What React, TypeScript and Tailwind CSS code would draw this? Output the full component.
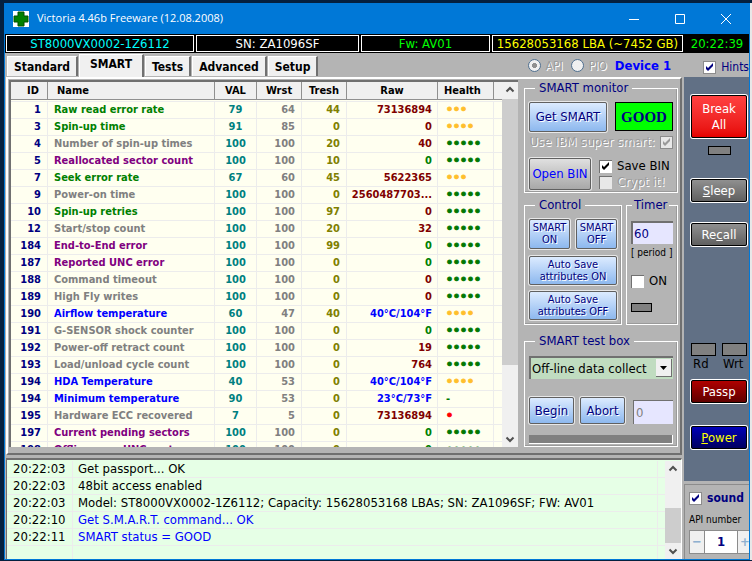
import React, { useState } from 'react';
import clsx from 'clsx';

type Attr = { id: number; name: string; val: number; wrst: number; tresh: number; raw: string; health: string };

const ATTRS: Attr[] = [
  { id: 1, name: 'Raw read error rate', val: 79, wrst: 64, tresh: 44, raw: '73136894', health: '•••' },
  { id: 3, name: 'Spin-up time', val: 91, wrst: 85, tresh: 0, raw: '0', health: '••••' },
  { id: 4, name: 'Number of spin-up times', val: 100, wrst: 100, tresh: 20, raw: '40', health: '•••••' },
  { id: 5, name: 'Reallocated sector count', val: 100, wrst: 100, tresh: 10, raw: '0', health: '•••••' },
  { id: 7, name: 'Seek error rate', val: 67, wrst: 60, tresh: 45, raw: '5622365', health: '•••' },
  { id: 9, name: 'Power-on time', val: 100, wrst: 100, tresh: 0, raw: '2560487703...', health: '•••••' },
  { id: 10, name: 'Spin-up retries', val: 100, wrst: 100, tresh: 97, raw: '0', health: '•••••' },
  { id: 12, name: 'Start/stop count', val: 100, wrst: 100, tresh: 20, raw: '32', health: '•••••' },
  { id: 184, name: 'End-to-End error', val: 100, wrst: 100, tresh: 99, raw: '0', health: '•••••' },
  { id: 187, name: 'Reported UNC error', val: 100, wrst: 100, tresh: 0, raw: '0', health: '•••••' },
  { id: 188, name: 'Command timeout', val: 100, wrst: 100, tresh: 0, raw: '0', health: '•••••' },
  { id: 189, name: 'High Fly writes', val: 100, wrst: 100, tresh: 0, raw: '0', health: '•••••' },
  { id: 190, name: 'Airflow temperature', val: 60, wrst: 47, tresh: 40, raw: '40°C/104°F', health: '••••' },
  { id: 191, name: 'G-SENSOR shock counter', val: 100, wrst: 100, tresh: 0, raw: '0', health: '•••••' },
  { id: 192, name: 'Power-off retract count', val: 100, wrst: 100, tresh: 0, raw: '19', health: '•••••' },
  { id: 193, name: 'Load/unload cycle count', val: 100, wrst: 100, tresh: 0, raw: '764', health: '•••••' },
  { id: 194, name: 'HDA Temperature', val: 40, wrst: 53, tresh: 0, raw: '40°C/104°F', health: '••••' },
  { id: 194, name: 'Minimum temperature', val: 90, wrst: 53, tresh: 0, raw: '23°C/73°F', health: '-' },
  { id: 195, name: 'Hardware ECC recovered', val: 7, wrst: 5, tresh: 0, raw: '73136894', health: '•' },
  { id: 197, name: 'Current pending sectors', val: 100, wrst: 100, tresh: 0, raw: '0', health: '•••••' },
  { id: 198, name: 'Offline scan UNC sectors', val: 100, wrst: 100, tresh: 0, raw: '0', health: '•••••' },
];

const LOG = [
  { time: '20:22:03', text: 'Get passport... OK' },
  { time: '20:22:03', text: '48bit access enabled' },
  { time: '20:22:03', text: 'Model: ST8000VX0002-1Z6112; Capacity: 15628053168 LBAs; SN: ZA1096SF; FW: AV01' },
  { time: '20:22:10', text: 'Get S.M.A.R.T. command... OK', blue: true },
  { time: '20:22:11', text: 'SMART status = GOOD', blue: true },
  { time: '', text: '' },
];

const nameColor = (id: number) => {
  if ([1, 3, 7, 10].includes(id)) return 'text-[#008000]';
  if ([5, 184, 187, 197, 198].includes(id)) return 'text-[#800080]';
  if ([190, 194].includes(id)) return 'text-[#0000ff]';
  return 'text-[#808080]';
};

const rawColor = (a: Attr) => {
  if (a.raw.includes('°')) return 'text-[#0000ff]';
  if (a.raw === '0' && ![3, 10, 188, 189].includes(a.id)) return 'text-[#008000]';
  return 'text-[#800000]';
};

const healthColor = (h: string) => {
  if (h === '•') return 'text-[#ff0000]';
  if (h.length === 3 || h.length === 4) return 'text-[#ffbf2b]';
  return 'text-[#007800]';
};

const Tick = ({ className }: { className?: string }) => (
  <svg viewBox="0 0 13 13" className={clsx('pointer-events-none size-[13px] [grid-area:1/1]', className)}>
    <path d="M3 5v3l2 2 5-5V2L5 7z" fill="currentColor" />
  </svg>
);

type CheckProps = { label: string; defaultChecked?: boolean; disabled?: boolean; sunken?: boolean; reverse?: boolean; className?: string };

const Check: React.FC<CheckProps> = ({ label, defaultChecked = false, disabled, sunken, reverse, className }) => {
  const [on, setOn] = useState(defaultChecked);
  return (
    <label className={clsx('flex items-center gap-[5px] whitespace-nowrap', reverse && 'flex-row-reverse', className)}>
      <span className="grid shrink-0 place-items-center">
        <input
          type="checkbox"
          checked={on}
          disabled={disabled}
          onChange={(e) => setOn(e.target.checked)}
          className={clsx(
            'size-[13px] appearance-none [grid-area:1/1]',
            sunken ? 'border-t border-l border-[#707070]' : 'border border-[#8c8c8c]',
            disabled ? 'bg-[#e8e8e8]' : 'bg-white'
          )}
        />
        {on && <Tick className={disabled ? 'text-[#9a9a9a]' : sunken ? 'text-black' : 'text-[#000080]'} />}
      </span>
      <span className={disabled ? 'text-[#9c9c9c] [text-shadow:1px_1px_0_#fff]' : ''}>{label}</span>
    </label>
  );
};

const BlueButton = ({ className, children }: { className?: string; children: React.ReactNode }) => (
  <button
    className={clsx(
      'rounded-[2px] border border-[#606060] text-[#000080] [text-shadow:1px_1px_0_#fff] shadow-[0_0_0_1px_#e8e8e8]',
      'bg-linear-to-b from-[#dcebff] to-[#8db8ee] flex shrink-0 items-center justify-center text-center',
      className
    )}
  >
    {children}
  </button>
);

const SideButton = ({ className, children }: { className?: string; children: React.ReactNode }) => (
  <button className={clsx('w-full rounded-[2px] border border-black ring-1 ring-white bg-linear-to-b', className)}>
    {children}
  </button>
);

const Group = ({ title, className, children }: { title: string; className?: string; children: React.ReactNode }) => (
  <fieldset className={clsx('min-w-0 border border-white shadow-[inset_-1px_-1px_0_#9a9a9a] px-1', className)}>
    <legend className="ml-[6px] px-1 text-[13px] leading-4 text-[#000080]">{title}</legend>
    {children}
  </fieldset>
);

const Led = ({ className }: { className?: string }) => (
  <div className={clsx('border border-black bg-[#808080]', className)} />
);

const Arrow = ({ down }: { down?: boolean }) => (
  <svg viewBox="0 0 16 16" className={clsx('size-4 shrink-0', down && 'rotate-180')}>
    <path d="M4.5 9.5L8 6l3.5 3.5" fill="none" stroke="#505050" strokeWidth="2" />
  </svg>
);

const TitleBar = () => (
  <header className="flex h-[31px] shrink-0 items-center bg-[#0078d7] pl-2 text-white">
    <svg viewBox="0 0 16 16" className="size-4">
      <rect width="16" height="16" fill="#fff" />
      <path d="M5 1h6v4h4v6h-4v4H5v-4H1V5h4z" fill="#008000" stroke="#005000" />
    </svg>
    <h1 className="ml-2 flex-1 font-['Open_Sans','Noto_Sans',sans-serif] text-[11px] [font-stretch:normal]">Victoria 4.46b Freeware (12.08.2008)</h1>
    <button aria-label="Minimize" className="flex w-[46px] justify-center">
      <svg viewBox="0 0 10 10" className="size-[10px]"><path d="M0 5.5h10" stroke="#fff" /></svg>
    </button>
    <button aria-label="Maximize" className="flex w-[46px] justify-center">
      <svg viewBox="0 0 10 10" className="size-[10px]"><path d="M.5.5h9v9h-9z" fill="none" stroke="#fff" /></svg>
    </button>
    <button aria-label="Close" className="flex w-[46px] justify-center">
      <svg viewBox="0 0 10 10" className="size-[10px]"><path d="M0 0l10 10M10 0L0 10" stroke="#fff" /></svg>
    </button>
  </header>
);

const InfoBar = () => (
  <div className="flex h-[19px] shrink-0 items-center gap-[2px] bg-black pl-px text-center text-[13px] leading-[15px] whitespace-nowrap">
    <div className="w-[188px] border border-white text-[#00ffff]">ST8000VX0002-1Z6112</div>
    <div className="w-[163px] border border-white text-white">SN: ZA1096SF</div>
    <div className="min-w-0 flex-1 border border-white text-[#00ff00]">Fw: AV01</div>
    <div className="w-[191px] border border-white text-[#ffff00]">15628053168 LBA (~7452 GB)</div>
    <div className="w-[64px] text-[#00ff00]">20:22:39</div>
  </div>
);

const TABS = ['Standard', 'SMART', 'Tests', 'Advanced', 'Setup'];

const TabBar = () => {
  const [active, setActive] = useState('SMART');
  return (
    <div className="flex h-6 shrink-0 items-end pl-[2px]">
      {TABS.map((t) => (
        <button
          key={t}
          onClick={() => setActive(t)}
          className={clsx(
            'mr-px border-t border-l border-white border-r-2 border-r-[#707070] bg-[#f0f0f0] text-[12px] leading-4 font-bold',
            t === active ? 'h-[23px] px-[10px] pb-1' : 'mb-px h-5 px-[6px]'
          )}
        >
          {t}
        </button>
      ))}
      <div className="flex-1" />
      <div className="flex items-center self-start pt-[3px] text-[12px] leading-4">
        {['API', 'PIO'].map((m) => (
          <label key={m} className="mr-2 flex items-center gap-[5px] text-[#9c9c9c] [text-shadow:1px_1px_0_#fff]">
            <input
              type="radio"
              name="mode"
              disabled
              defaultChecked={m === 'API'}
              className="size-[13px] appearance-none rounded-full border border-[#4f6f8f] bg-[#f0f0f0] checked:bg-[radial-gradient(#909090_30%,#f0f0f0_35%)]"
            />
            {m}
          </label>
        ))}
        <span className="text-[13px] font-bold text-[#0000ff]">Device 1</span>
        <Check label="Hints" defaultChecked className="ml-8 pt-[3px] text-[#000080]" />
      </div>
    </div>
  );
};

const HEAD = 'border-r border-b border-[#909090] bg-[#f0f0f0] pt-px font-bold text-black';
const CELL = 'border-r border-b border-[#ececec]';
const DOTS = "text-[11px] font-['DejaVu_Sans',sans-serif] [font-stretch:normal] [-webkit-text-stroke:1px_currentColor]";

const AttrTable = () => (
  <div className="flex min-w-0 flex-1 border-t-2 border-l-2 border-[#707070] bg-[#fffff0]">
    <div className="min-w-0 flex-1 overflow-hidden">
      <table className="w-full table-fixed border-separate border-spacing-0 text-[11px] leading-4 font-bold whitespace-nowrap">
        <colgroup>
          <col className="w-[37px]" />
          <col />
          <col className="w-[42px]" />
          <col className="w-[45px]" />
          <col className="w-[45px]" />
          <col className="w-[91px]" />
          <col className="w-[56px]" />
          <col className="w-2" />
        </colgroup>
        <thead>
          <tr>
            <th className={clsx(HEAD, 'pr-2 text-right')}>ID</th>
            <th className={clsx(HEAD, 'pl-[9px] text-left')}>Name</th>
            <th className={HEAD}>VAL</th>
            <th className={HEAD}>Wrst</th>
            <th className={HEAD}>Tresh</th>
            <th className={HEAD}>Raw</th>
            <th className={clsx(HEAD, 'pl-[6px] text-left')}>Health</th>
            <th className="border-b border-[#909090] bg-[#f0f0f0]" />
          </tr>
          <tr aria-hidden="true">
            <td colSpan={8} className="h-[2px] border-b border-[#ececec]" />
          </tr>
        </thead>
        <tbody>
          {ATTRS.map((a, i) => (
            <tr key={i}>
              <td className={clsx(CELL, 'pr-[6px] text-right text-[#000080]')}>{a.id}</td>
              <td className={clsx(CELL, 'pl-[6px]', nameColor(a.id))}>{a.name}</td>
              <td className={clsx(CELL, 'text-center text-[#008080]')}>{a.val}</td>
              <td className={clsx(CELL, 'pr-[6px] text-right text-[#808080]')}>{a.wrst}</td>
              <td className={clsx(CELL, 'pr-[6px] text-right text-[#808000]')}>{a.tresh}</td>
              <td className={clsx(CELL, 'pr-[5px] text-right', rawColor(a))}>{a.raw}</td>
              <td className={clsx(CELL, 'pl-2', a.health !== '-' && DOTS, healthColor(a.health))}>{a.health}</td>
              <td className="border-b border-[#ececec]" />
            </tr>
          ))}
        </tbody>
      </table>
    </div>
    <div className="flex w-4 flex-col bg-[#f0f0f0]">
      <Arrow />
      <div className="mt-px h-[266px] bg-[#cdcdcd]" />
      <div className="flex-1" />
      <Arrow down />
    </div>
  </div>
);

const SmartPanel = () => (
  <div className="flex w-[154px] shrink-0 flex-col text-[13px] leading-4">
    <Group title="SMART monitor" className="h-[116px]">
      <div className="mt-[6px] flex gap-2">
        <BlueButton className="h-[30px] w-[78px]">Get SMART</BlueButton>
        <output className="flex h-[29px] flex-1 items-center justify-center border border-black bg-[#00ff00] font-['Liberation_Serif',serif] text-[15px] font-bold text-[#000080]">
          GOOD
        </output>
      </div>
      <Check label="Use IBM super smart:" defaultChecked disabled reverse className="mt-[2px] justify-start" />
      <div className="mt-2 flex gap-2">
        <button className="h-8 w-[62px] rounded-[2px] border border-[#606060] bg-linear-to-b from-[#e0e0e0] to-[#a8a8a8] whitespace-nowrap text-[#0000ff] shadow-[0_0_0_1px_#e8e8e8]">
          Open BIN
        </button>
        <div>
          <Check label="Save BIN" defaultChecked sunken />
          <Check label="Crypt it!" disabled sunken />
        </div>
      </div>
    </Group>

    <div className="mt-1 flex gap-1">
      <Group title="Control" className="h-[128px] flex-1 text-[11px] leading-3">
        <div className="mt-[6px] flex justify-between">
          <BlueButton className="h-[30px] w-[41px]">SMART<br />ON</BlueButton>
          <BlueButton className="h-[30px] w-[41px]">SMART<br />OFF</BlueButton>
        </div>
        <BlueButton className="mt-[7px] h-[29px] w-full">Auto Save<br />attributes ON</BlueButton>
        <BlueButton className="mt-[6px] h-[29px] w-full">Auto Save<br />attributes OFF</BlueButton>
      </Group>
      <fieldset className="h-[128px] w-[52px] min-w-0 border border-white px-1 shadow-[inset_-1px_-1px_0_#9a9a9a]">
        <legend className="ml-px px-[2px] text-[#000080]">Timer</legend>
        <input aria-label="period" defaultValue="60" className="mt-2 block h-[23px] w-full border-t-2 border-l-2 border-[#707070] bg-[#e6e6ff] pl-px text-[#000080]" />
        <div className="mt-px text-[10px] leading-4 whitespace-nowrap">[ period ]</div>
        <Check label="ON" sunken className="mt-3" />
        <Led className="mt-[14px] h-[9px] w-[21px]" />
      </fieldset>
    </div>

    <Group title="SMART test box" className="mt-2 h-[117px]">
      <div className="mt-[7px] grid">
        <select aria-label="Test" className="h-[23px] w-full appearance-none border-t-2 border-l-2 border-[#707070] bg-[#c0dcc0] pl-px text-black [grid-area:1/1]">
          <option>Off-line data collect</option>
        </select>
        <span className="pointer-events-none mt-[3px] mr-px flex h-[18px] w-4 items-center justify-center justify-self-end border-r border-b border-[#707070] bg-[#f0f0f0] [grid-area:1/1]">
          <svg viewBox="0 0 7 4" className="h-1 w-[7px]"><path d="M0 0h7L3.5 4z" /></svg>
        </span>
      </div>
      <div className="mt-[18px] flex items-end gap-[6px]">
        <BlueButton className="h-[27px] w-[45px]">Begin</BlueButton>
        <BlueButton className="h-[27px] w-[45px]">Abort</BlueButton>
        <input aria-label="Test value" disabled defaultValue="0" className="ml-auto h-6 w-10 border-t border-l border-[#707070] bg-[#e6e6ff] pl-[2px] text-[#808080]" />
      </div>
      <div className="mt-[11px] h-[9px] border-r border-b border-white bg-[#808080]" />
    </Group>
  </div>
);

const SideBar = () => (
  <aside className="flex w-[65px] shrink-0 flex-col overflow-hidden text-[13px] leading-4">
    <div className="flex flex-1 flex-col items-center bg-[#617085] pt-[18px] pr-[2px] pl-[7px]">
      <SideButton className="h-[43px] from-[#ff4040] to-[#e60000] text-white">Break<br />All</SideButton>
      <Led className="mt-2 h-[9px] w-[23px]" />
      <SideButton className="mt-6 h-[23px] from-[#909090] to-[#606060] text-white"><u>S</u>leep</SideButton>
      <SideButton className="mt-[21px] h-[23px] from-[#909090] to-[#606060] text-white">Re<u>c</u>all</SideButton>
      <div className="mt-[97px] flex w-full justify-between">
        <div><Led className="h-[13px] w-[25px]" /><div className="pl-[2px]">Rd</div></div>
        <div><Led className="h-[13px] w-[25px]" /><div className="pl-px">Wrt</div></div>
      </div>
      <SideButton className="mt-2 h-[23px] from-[#b00000] to-[#600000] text-white">Passp</SideButton>
      <SideButton className="mt-[23px] h-[23px] from-[#0000b8] to-[#000060] text-[#ffff00]"><u>P</u>ower</SideButton>
    </div>
    <div className="mt-[3px] h-[75px] border-t border-l border-[#8c8c8c] pt-[5px] pl-1">
      <Check label="sound" defaultChecked className="text-[12px] font-bold text-[#000080]" />
      <div className="mt-2 text-[10px] leading-3 whitespace-nowrap">API number</div>
      <div className="mt-1 flex h-6 w-[64px] border border-[#8c8c8c] bg-[#f0f0f0] text-[#8fb0d0]">
        <button aria-label="Less" className="w-[15px] font-bold">−</button>
        <input aria-label="API number" defaultValue="1" className="w-[34px] border-x border-[#8c8c8c] bg-white text-center font-bold text-[#000080]" />
        <button aria-label="More" className="w-[15px] font-bold">+</button>
      </div>
    </div>
  </aside>
);

const LogPanel = () => (
  <div className="mt-[3px] flex h-[101px] shrink-0 border-t-2 border-r border-l border-[#707070] border-r-white bg-[#e6ffe6] pt-px">
    <table className="min-w-0 flex-1 table-fixed border-separate border-spacing-0 text-[13px] leading-4 whitespace-nowrap">
      <colgroup>
        <col className="w-[66px]" />
        <col />
        <col className="w-[7px]" />
      </colgroup>
      <tbody>
        {LOG.map((l, i) => (
          <tr key={i} className="h-[17px]">
            <td className={clsx(CELL, 'pl-[6px]')}>{l.time}</td>
            <td className={clsx(CELL, 'pl-[5px]', l.blue && 'text-[#0000ff]')}>{l.text}</td>
            <td className="border-b border-[#ececec]" />
          </tr>
        ))}
      </tbody>
    </table>
    <div className="flex w-4 flex-col bg-[#f0f0f0]">
      <Arrow />
      <div className="flex-1" />
      <div className="h-[35px] bg-[#cdcdcd]" />
      <Arrow down />
    </div>
  </div>
);

export default function App() {
  return (
    <div className="flex h-screen bg-[#04203f] pt-[3px] pb-px pl-1 font-['DejaVu_Sans_Condensed','DejaVu_Sans',sans-serif] [font-stretch:condensed] text-black">
      <div className="flex min-w-0 flex-1 flex-col overflow-hidden border border-t-0 border-[#0078d7] bg-[#b4b4b4]">
        <TitleBar />
        <InfoBar />
        <TabBar />
        <div className="flex min-h-0 flex-1">
          <main className="flex min-w-0 flex-1 flex-col pr-[2px] pl-px">
            <div className="flex min-h-0 flex-1 gap-[6px] border-t-2 border-l-2 border-white border-r-2 border-b-2 border-r-[#707070] border-b-[#707070] pt-px pr-[2px] pb-[6px] pl-px">
              <AttrTable />
              <SmartPanel />
            </div>
            <LogPanel />
          </main>
          <SideBar />
        </div>
      </div>
      <div className="w-[2px] shrink-0 bg-[#e8e8e8]" />
    </div>
  );
}
